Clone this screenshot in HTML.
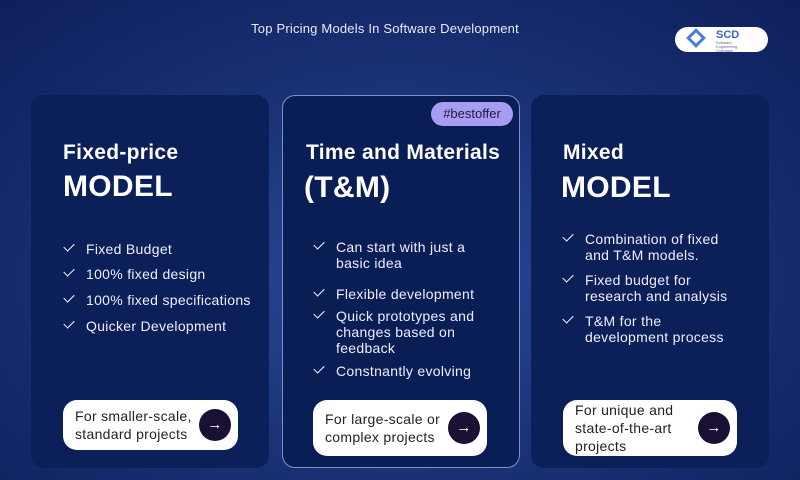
<!DOCTYPE html>
<html><head><meta charset="utf-8"><style>
*{margin:0;padding:0;box-sizing:border-box}
body{width:800px;height:480px;overflow:hidden;font-family:"Liberation Sans",sans-serif;color:#fff;
background:radial-gradient(ellipse 70% 80% at 50% 58%,#2b4d9c 0%,#1b3478 45%,#0e1f5c 100%);position:relative}
.t{position:absolute;top:21px;left:0;width:770px;text-align:center;font-size:13px;color:#e8ecf7;letter-spacing:0.2px}
.logo{position:absolute;left:675px;top:27px;width:93px;height:25px;background:#fff;border-radius:13px}
.logo .d{position:absolute;left:14px;top:4px;width:14px;height:14px;border:3px solid #4a7be0;transform:rotate(45deg)}
.logo b{position:absolute;left:41px;top:2px;font-size:11px;color:#3a66d0}
.logo i{position:absolute;left:41px;top:14px;font-size:4px;line-height:4px;color:#5a6a9a;font-style:normal}
.card{position:absolute;top:95px;height:373px;width:238px;background:#0b1f58;border-radius:13px}
.c2{border:1px solid #7c8fd0;background:#0a1e56}
.h1{position:absolute;font-size:21px;font-weight:bold;letter-spacing:0.3px}
.h2{position:absolute;font-size:30px;font-weight:bold;letter-spacing:0.3px}
.li{position:absolute;font-size:14px;line-height:16px;color:#eef;letter-spacing:0.3px}
.li:before{content:"";position:absolute;left:-22px;top:2px;width:9px;height:5px;border-left:1.5px solid #fff;border-bottom:1.5px solid #fff;transform:rotate(-45deg)}
.btn{position:absolute;background:#fff;border-radius:14px;color:#222;font-size:14px;line-height:18px;padding-left:12px;display:flex;align-items:center;letter-spacing:0.3px}
.btn .a{position:absolute;right:7px;top:50%;margin-top:-16px;width:32px;height:32px;border-radius:50%;background:#1a1033;color:#fff;font-size:15px;text-align:center;line-height:31px}
.tag{position:absolute;left:431px;top:102px;width:82px;height:24px;border-radius:12px;background:#a89cf5;color:#1c1c3c;font-size:13px;text-align:center;line-height:24px}
</style></head><body>
<div class="t">Top Pricing Models In Software Development</div>
<div class="logo"><div class="d"></div><b>SCD</b><i>Software<br>Engineering<br>Company</i></div>

<div class="card" style="left:31px"></div>
<div class="card c2" style="left:282px"></div>
<div class="card" style="left:531px"></div>
<div class="tag">#bestoffer</div>

<div class="h1" style="left:63px;top:141px">Fixed-price</div>
<div class="h2" style="left:63px;top:170px">MODEL</div>
<div class="li" style="left:86px;top:241px">Fixed Budget</div>
<div class="li" style="left:86px;top:266px">100% fixed design</div>
<div class="li" style="left:86px;top:292px">100% fixed specifications</div>
<div class="li" style="left:86px;top:318px">Quicker Development</div>
<div class="btn" style="left:63px;top:400px;width:175px;height:50px">For smaller-scale,<br>standard projects<span class="a">→</span></div>

<div class="h1" style="left:306px;top:141px">Time and Materials</div>
<div class="h2" style="left:304px;top:171px">(T&amp;M)</div>
<div class="li" style="left:336px;top:239px">Can start with just a<br>basic idea</div>
<div class="li" style="left:336px;top:286px">Flexible development</div>
<div class="li" style="left:336px;top:308px">Quick prototypes and<br>changes based on<br>feedback</div>
<div class="li" style="left:336px;top:363px">Constnantly evolving</div>
<div class="btn" style="left:313px;top:400px;width:174px;height:56px">For large-scale or<br>complex projects<span class="a">→</span></div>

<div class="h1" style="left:563px;top:141px">Mixed</div>
<div class="h2" style="left:561px;top:171px">MODEL</div>
<div class="li" style="left:585px;top:231px">Combination of fixed<br>and T&amp;M models.</div>
<div class="li" style="left:585px;top:272px">Fixed budget for<br>research and analysis</div>
<div class="li" style="left:585px;top:313px">T&amp;M for the<br>development process</div>
<div class="btn" style="left:563px;top:400px;width:174px;height:56px">For unique and<br>state-of-the-art<br>projects<span class="a">→</span></div>
</body></html>
